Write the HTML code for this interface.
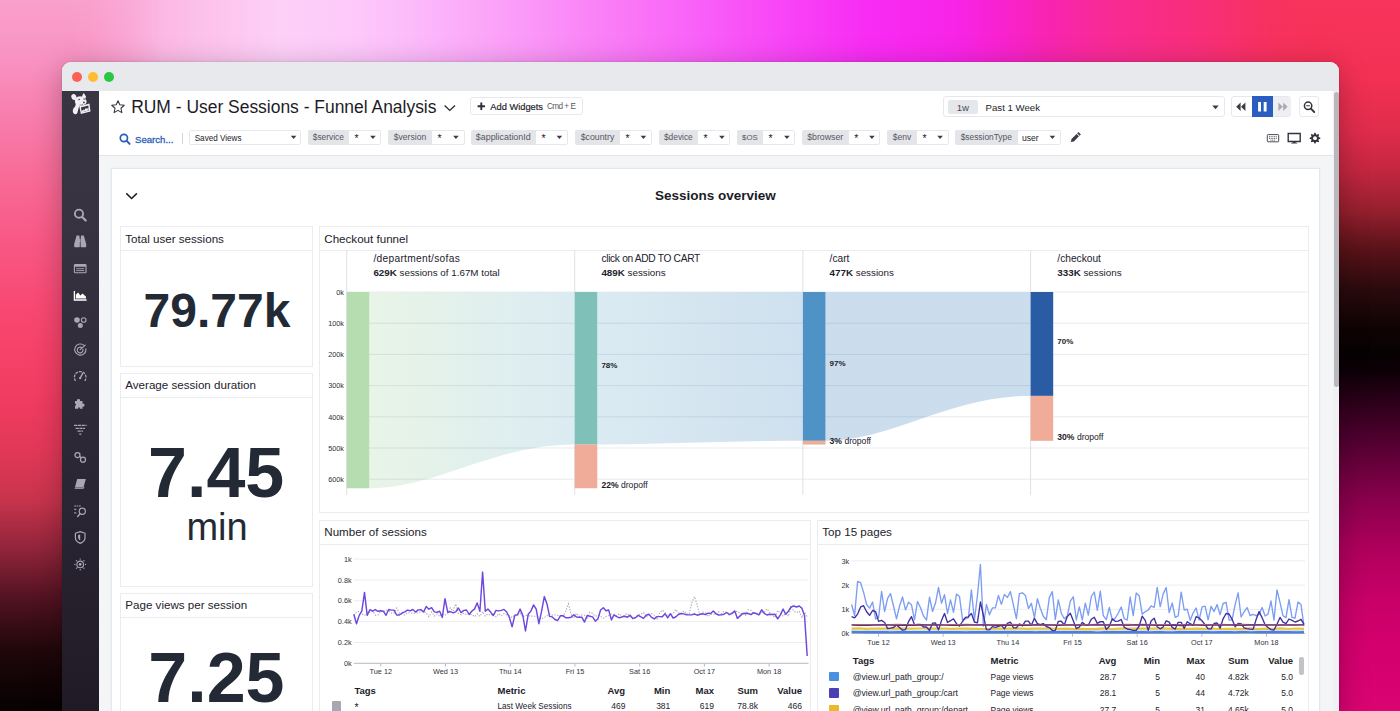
<!DOCTYPE html><html><head><meta charset="utf-8"><title>RUM - User Sessions - Funnel Analysis</title><style>
*{box-sizing:border-box;margin:0;padding:0}
html,body{width:1400px;height:711px;overflow:hidden}
body{position:relative;font-family:"Liberation Sans",sans-serif;color:#1c1c28;
 background:linear-gradient(90deg,#f9a0cc 0%,#fba9d7 7%,#fcc0ea 14%,#fdd0f8 20%,#fdcafa 25%,#fcb9fa 30%,#fba0f8 36%,#fa80f7 43%,#f960f8 50%,#f840f6 57%,#f82cf4 62%,#f824e8 68%,#f822d0 71.5%,#f824b0 75%,#f82a98 78.5%,#f82c88 82%,#f82e78 86%,#f83068 89%,#f8325c 93%,#f83458 100%)}
.abs{position:absolute}
#lstrip{left:0;top:0;width:160px;height:711px;background:linear-gradient(180deg,#f9a0cc 0,#f892c2 60px,#f87cab 120px,#f86a96 180px,#f85884 240px,#f84a74 300px,#f64268 350px,#f03c60 400px,#e23858 450px,#c8344c 500px,#90243a 550px,#501220 600px,#20070a 650px,#0a0203 700px,#080102 711px);-webkit-mask-image:linear-gradient(90deg,#000 70px,transparent 160px);mask-image:linear-gradient(90deg,#000 70px,transparent 160px)}
#rstrip{left:1240px;top:0;width:160px;height:711px;background:linear-gradient(180deg,#f8345c 0,#f23054 80px,#e02c4c 130px,#c42640 170px,#96202e 210px,#581218 250px,#2a0a0c 290px,#0e0304 330px,#070102 355px,#0c0006 370px,#2a0018 400px,#5a0035 450px,#8a004c 500px,#b0005c 550px,#c80068 600px,#d4006e 650px,#da0472 711px);-webkit-mask-image:linear-gradient(270deg,#000 70px,transparent 160px);mask-image:linear-gradient(270deg,#000 70px,transparent 160px)}
#win{left:62px;top:62px;width:1277px;height:700px;border-radius:9px 9px 0 0;background:#f4f5f7;overflow:hidden;box-shadow:0 6px 30px rgba(0,0,0,.27),0 0 2px rgba(0,0,0,.2)}
#tbar{left:0;top:0;width:1277px;height:29px;background:#e8e9ed}
.tl{position:absolute;top:9.5px;width:10px;height:10px;border-radius:50%}
#side{left:0;top:29px;width:37px;height:680px;background:linear-gradient(180deg,#3a3542 0,#37323f 150px,#2b2633 400px,#1f1a26 620px)}
#hdr{left:37px;top:29px;width:1234px;height:64.5px;background:#fff;border-bottom:1px solid #e3e4e8}
#scroll{left:1271px;top:29px;width:6px;height:680px;background:#f1f1f3}
#thumb{left:1271.5px;top:30px;width:5px;height:294.5px;background:#b9b9bd;border-radius:3px}
svg{position:absolute;overflow:visible}
.t{position:absolute;white-space:nowrap;line-height:1}
</style></head><body>
<div id="lstrip" class="abs"></div><div id="rstrip" class="abs"></div>
<div id="win" class="abs">
<div id="tbar" class="abs"><div class="tl" style="left:9.7px;background:#fe5f57"></div><div class="tl" style="left:25.8px;background:#febc2e"></div><div class="tl" style="left:42px;background:#28c840"></div></div>
<div id="side" class="abs"><!--SIDE--></div>
<div id="hdr" class="abs"></div>
<div id="scroll" class="abs"></div><div id="thumb" class="abs"></div>
<div class="abs" id="pg" style="left:-62px;top:-62px;width:1400px;height:773px"><div class="abs" style="left:470.30px;top:97.00px;width:112.30px;height:18.00px;border:1px solid #e7e8ed;border-radius:3px;background:#fff"></div><div class="abs" style="left:943.00px;top:96.40px;width:282.00px;height:20.60px;border:1px solid #e7e8ed;border-radius:3px;background:#fff"></div><div class="abs" style="left:947.50px;top:99.70px;width:30.20px;height:14.30px;background:#e6e7eb;border-radius:2px"></div><div class="abs" style="left:1231.40px;top:96.40px;width:60.00px;height:20.60px;border:1px solid #e7e8ed;border-radius:3px;background:#fff"></div><div class="abs" style="left:1272.90px;top:97.20px;width:17.90px;height:19.00px;background:#efeff3;border-radius:0 2px 2px 0"></div><div class="abs" style="left:1251.70px;top:96.40px;width:21.30px;height:20.60px;background:#2a5dbf"></div><div class="abs" style="left:1298.60px;top:96.40px;width:20.70px;height:20.60px;border:1px solid #e7e8ed;border-radius:3px;background:#fff"></div><div class="abs" style="left:181.60px;top:132.50px;width:1.00px;height:11.50px;background:#d3d4d9"></div><div class="abs" style="left:189.00px;top:130.00px;width:112.00px;height:14.50px;border:1px solid #e7e8ed;border-radius:2px;background:#fff"></div><div class="abs" style="left:307.70px;top:130.00px;width:73.80px;height:14.50px;border:1px solid #e7e8ed;border-radius:2px;background:#fff"></div><div class="abs" style="left:307.70px;top:130.00px;width:41.30px;height:14.50px;background:#e4e5e9;border-radius:2px 0 0 2px"></div><div class="abs" style="left:388.00px;top:130.00px;width:76.50px;height:14.50px;border:1px solid #e7e8ed;border-radius:2px;background:#fff"></div><div class="abs" style="left:388.00px;top:130.00px;width:44.00px;height:14.50px;background:#e4e5e9;border-radius:2px 0 0 2px"></div><div class="abs" style="left:470.50px;top:130.00px;width:97.50px;height:14.50px;border:1px solid #e7e8ed;border-radius:2px;background:#fff"></div><div class="abs" style="left:470.50px;top:130.00px;width:65.50px;height:14.50px;background:#e4e5e9;border-radius:2px 0 0 2px"></div><div class="abs" style="left:575.00px;top:130.00px;width:77.00px;height:14.50px;border:1px solid #e7e8ed;border-radius:2px;background:#fff"></div><div class="abs" style="left:575.00px;top:130.00px;width:45.00px;height:14.50px;background:#e4e5e9;border-radius:2px 0 0 2px"></div><div class="abs" style="left:658.70px;top:130.00px;width:71.80px;height:14.50px;border:1px solid #e7e8ed;border-radius:2px;background:#fff"></div><div class="abs" style="left:658.70px;top:130.00px;width:39.30px;height:14.50px;background:#e4e5e9;border-radius:2px 0 0 2px"></div><div class="abs" style="left:736.70px;top:130.00px;width:58.80px;height:14.50px;border:1px solid #e7e8ed;border-radius:2px;background:#fff"></div><div class="abs" style="left:736.70px;top:130.00px;width:26.30px;height:14.50px;background:#e4e5e9;border-radius:2px 0 0 2px"></div><div class="abs" style="left:801.70px;top:130.00px;width:78.80px;height:14.50px;border:1px solid #e7e8ed;border-radius:2px;background:#fff"></div><div class="abs" style="left:801.70px;top:130.00px;width:47.00px;height:14.50px;background:#e4e5e9;border-radius:2px 0 0 2px"></div><div class="abs" style="left:887.00px;top:130.00px;width:61.70px;height:14.50px;border:1px solid #e7e8ed;border-radius:2px;background:#fff"></div><div class="abs" style="left:887.00px;top:130.00px;width:30.00px;height:14.50px;background:#e4e5e9;border-radius:2px 0 0 2px"></div><div class="abs" style="left:955.00px;top:130.00px;width:106.00px;height:14.50px;border:1px solid #e7e8ed;border-radius:2px;background:#fff"></div><div class="abs" style="left:955.00px;top:130.00px;width:62.50px;height:14.50px;background:#e4e5e9;border-radius:2px 0 0 2px"></div><div class="abs" style="left:110.70px;top:167.50px;width:1209.80px;height:612.50px;background:#fff;border:1px solid #e6e7ec;box-shadow:0 0 2px rgba(40,40,60,.06)"></div><div class="abs" style="left:120.30px;top:226.30px;width:192.40px;height:140.60px;border:1px solid #ebecf0;background:#fff"></div><div class="abs" style="left:120.30px;top:250.10px;width:192.40px;height:1.00px;background:#ebecf0"></div><div class="abs" style="left:120.30px;top:372.90px;width:192.40px;height:214.40px;border:1px solid #ebecf0;background:#fff"></div><div class="abs" style="left:120.30px;top:396.70px;width:192.40px;height:1.00px;background:#ebecf0"></div><div class="abs" style="left:120.30px;top:593.00px;width:192.40px;height:187.00px;border:1px solid #ebecf0;background:#fff"></div><div class="abs" style="left:120.30px;top:616.80px;width:192.40px;height:1.00px;background:#ebecf0"></div><div class="abs" style="left:319.30px;top:226.30px;width:989.90px;height:287.10px;border:1px solid #ebecf0;background:#fff"></div><div class="abs" style="left:319.30px;top:250.10px;width:989.90px;height:1.00px;background:#ebecf0"></div><div class="abs" style="left:319.30px;top:520.00px;width:491.90px;height:260.00px;border:1px solid #ebecf0;background:#fff"></div><div class="abs" style="left:319.30px;top:543.80px;width:491.90px;height:1.00px;background:#ebecf0"></div><div class="abs" style="left:817.30px;top:520.00px;width:491.90px;height:260.00px;border:1px solid #ebecf0;background:#fff"></div><div class="abs" style="left:817.30px;top:543.80px;width:491.90px;height:1.00px;background:#ebecf0"></div><div class="abs" style="left:331.50px;top:701.00px;width:9.70px;height:11.00px;background:#a8a8b4;border-radius:1px"></div><div class="abs" style="left:829.00px;top:671.90px;width:10.00px;height:9.50px;background:#4a90e2;border-radius:1px"></div><div class="abs" style="left:829.00px;top:688.40px;width:10.00px;height:9.50px;background:#4a3fb5;border-radius:1px"></div><div class="abs" style="left:829.00px;top:704.90px;width:10.00px;height:9.50px;background:#e8bb2a;border-radius:1px"></div><div class="abs" style="left:1299.40px;top:657.00px;width:4.20px;height:18.00px;background:#c2c2c8;border-radius:2px"></div><svg width="1400" height="773" style="left:0;top:0"><polygon points="118.00,100.70 119.82,104.79 124.28,105.26 120.95,108.26 121.88,112.64 118.00,110.40 114.12,112.64 115.05,108.26 111.72,105.26 116.18,104.79" fill="none" stroke="#33333d" stroke-width="1.05" stroke-linejoin="round"/><polyline points="444.6,105.4 449.8,110.4 455,105.4" fill="none" stroke="#2a2a35" stroke-width="1.35"/><path d="M477.6 106.3h7.4M481.3 102.6v7.4" stroke="#2f2f3a" stroke-width="1.9" fill="none"/><path d="M1212.30 105.60h6.4l-3.2 3.6z" fill="#3b3b46"/><path d="M1240.6 102.6v8.4l-4.4-4.2zM1245.4 102.6v8.4l-4.4-4.2z" fill="#3b3b46"/><path d="M1258.1 102v9.4h2.9v-9.4zM1263.7 102v9.4h2.9v-9.4z" fill="#fff"/><path d="M1278.4 102.6v8.4l4.4-4.2zM1283.2 102.6v8.4l4.4-4.2z" fill="#a9a9b3"/><circle cx="1308.1" cy="105.8" r="3.7" fill="none" stroke="#33333d" stroke-width="1.5"/><path d="M1310.9 108.7l3.3 3.3" stroke="#33333d" stroke-width="1.8" stroke-linecap="round"/><path d="M1306.3 105.8h3.6" stroke="#33333d" stroke-width="1.1"/><circle cx="123.9" cy="138" r="3.6" fill="none" stroke="#2b5fb5" stroke-width="1.7"/><path d="M126.7 140.9l2.9 3" stroke="#2b5fb5" stroke-width="2" stroke-linecap="round"/><path d="M290.80 135.80h5.6l-2.8 3.2z" fill="#3b3b46"/><path d="M370.10 135.80h5.6l-2.8 3.2z" fill="#3b3b46"/><path d="M453.10 135.80h5.6l-2.8 3.2z" fill="#3b3b46"/><path d="M556.60 135.80h5.6l-2.8 3.2z" fill="#3b3b46"/><path d="M640.60 135.80h5.6l-2.8 3.2z" fill="#3b3b46"/><path d="M719.10 135.80h5.6l-2.8 3.2z" fill="#3b3b46"/><path d="M784.10 135.80h5.6l-2.8 3.2z" fill="#3b3b46"/><path d="M869.10 135.80h5.6l-2.8 3.2z" fill="#3b3b46"/><path d="M937.30 135.80h5.6l-2.8 3.2z" fill="#3b3b46"/><path d="M1049.60 135.80h5.6l-2.8 3.2z" fill="#3b3b46"/><g transform="translate(1075.3 137.6) rotate(45)"><path d="M-1.7 -6.2h3.4v1.9h-3.4zM-1.7 -3.5h3.4v7.2l-1.7 2.6l-1.7-2.6z" fill="#3d3d48"/></g><rect x="1267.3" y="134.6" width="11.4" height="7.2" rx="0.8" fill="none" stroke="#4a4a55" stroke-width="1"/><path d="M1269 136.7h8M1269 138.4h8M1270.4 140.1h5.2" stroke="#4a4a55" stroke-width=".9" stroke-dasharray="1 .7"/><path d="M1288.2 133.5h12v8h-12z" fill="none" stroke="#33333d" stroke-width="1.4"/><path d="M1292.8 141.5h2.8v1.3h1.6v.8h-6v-.8h1.6z" fill="#33333d"/><polygon points="1320.37,137.67 1320.37,138.73 1318.73,139.33 1318.44,140.04 1319.17,141.63 1318.43,142.37 1316.84,141.64 1316.13,141.93 1315.53,143.57 1314.47,143.57 1313.87,141.93 1313.16,141.64 1311.57,142.37 1310.83,141.63 1311.56,140.04 1311.27,139.33 1309.63,138.73 1309.63,137.67 1311.27,137.07 1311.56,136.36 1310.83,134.77 1311.57,134.03 1313.16,134.76 1313.87,134.47 1314.47,132.83 1315.53,132.83 1316.13,134.47 1316.84,134.76 1318.43,134.03 1319.17,134.77 1318.44,136.36 1318.73,137.07" fill="#33333d"/><circle cx="1315" cy="138.2" r="1.9" fill="#fff"/><g fill="#f1eff4"><ellipse cx="73.900" cy="97" rx="2.500" ry="2.900" transform="rotate(-25 73.900 97)"/><path d="M81.800 97.300l1.300-3.700q.4-.8 1 -.1l2 3.300-.9 1.900-1.700-.6z"/><path d="M75.300 98.400q3.200-3.300 7.400-1.700 3.600 1.700 3.900 5.100.1 1.500-1.300 2.400l-4.100 1.700q-2.300.8-4.300-.5-2.900-2.300-1.600-7z"/><path d="M76.300 103.300q-.9 1.700-1.200 3.200-2.300 1.700-2.400 4.400.1 2.600 2 3.300 2 .4 2.700-1.500l1.100-4.300 1.200-3.700z"/><path d="M79.300 106.200l10.200-2.600 1 7.800-9.700 2.500z"/></g><path d="M80.900 107.500l7.400-1.900.7 4.800-7.100 1.900z" fill="#38333f"/><path d="M81.500 111.500l1.700-2 1.200.8 1.500-2.500 1.100 1.400 1.300-2.100.5 3.200-6.800 1.900z" fill="#f1eff4"/><circle cx="79.100" cy="99.400" r=".75" fill="#38333f"/><circle cx="83.900" cy="102.400" r=".85" fill="#38333f"/><path d="M83.400 98.200q1.700-.6 2.300 1.600-1.300.7-2.400-.3z" fill="#38333f" opacity=".55"/><path d="M79.600 104.900q1.700.6 3.500-.5" stroke="#38333f" stroke-width=".5" fill="none"/><circle cx="79" cy="213.700" r="4.100" fill="none" stroke="#aaa6b4" stroke-width="1.900"/><path d="M82.200 217l3.500 3.500" stroke="#aaa6b4" stroke-width="2.300" stroke-linecap="round"/><path d="M76.600 235.600h2.700l.5 3.400v7.600q0 .6-.6.6h-4.400q-.6 0-.6-.6v-2.600zM83.800 235.600h-2.700l-.5 3.400v7.600q0 .6.600.6h4.400q.6 0 .6-.6v-2.600zM79.400 239.300h1.600v3h-1.600z" fill="#aaa6b4"/><rect x="74.400" y="264.500" width="11.600" height="8.300" rx=".8" fill="none" stroke="#aaa6b4" stroke-width="1.100"/><path d="M74.400 265h11.600v1.800h-11.600z" fill="#aaa6b4"/><path d="M76.200 268.700h8M76.200 270.600h8" stroke="#aaa6b4" stroke-width=".9"/><path d="M74.400 291v9h12.200" fill="none" stroke="#fff" stroke-width="1.300"/><path d="M75.800 298.600v-3.800l2.300-2.300 2.300 2.900 2.200-2 3.400 3.300v1.900z" fill="#fff"/><circle cx="77" cy="320" r="2.800" fill="#aaa6b4"/><circle cx="83.700" cy="320" r="2.300" fill="none" stroke="#aaa6b4" stroke-width="1.100"/><circle cx="80.300" cy="325.400" r="2.500" fill="#aaa6b4"/><g fill="none" stroke="#aaa6b4" stroke-width="1.150" stroke-linecap="round"><path d="M84.300 345.600a5.600 5.600 0 1 0 1.600 3.200"/><path d="M81.900 347.700a2.900 2.900 0 1 0 1.100 1.700"/><path d="M80.200 349.700l5-4.600"/></g><g fill="none" stroke="#aaa6b4" stroke-linecap="butt"><path d="M75.600 380.900A5.800 5.800 0 1 1 84.800 380.900" stroke-width="1.300" stroke-dasharray="2.700 1.100"/><path d="M80.200 378l2.500-4.600" stroke-width="1.500" stroke-linecap="round"/></g><circle cx="80.200" cy="378.100" r="1.200" fill="#aaa6b4"/><path d="M75 401h2.100a1.500 1.500 0 1 1 2.800 0h2.600v2.700a1.500 1.500 0 1 1 0 2.800v2.200h-2.600v-1.200h-1.700v1.200h-3.200v-3.200h1v-1.700h-1z" fill="#aaa6b4"/><path d="M74 425.400h12.600M75.600 428.300h9.400M77.600 431.200h5.400M79.300 434.100h2" stroke="#aaa6b4" stroke-width="1.250" stroke-dasharray="3.200 .6" fill="none"/><g fill="none" stroke="#aaa6b4" stroke-width="1.250"><circle cx="77.500" cy="455" r="2.500"/><circle cx="83" cy="459.700" r="2.500"/><path d="M79.600 456.600q1.200-.2 1.300 1.500"/></g><path d="M77.200 479h8.600l-2.300 8.600h-8.600z" fill="#aaa6b4"/><path d="M74.700 488.300h8.800l.5-1.300" fill="none" stroke="#aaa6b4" stroke-width="1"/><path d="M74.200 506h7M74.200 509.400h2.700M74.200 512.800h2.700" stroke="#aaa6b4" stroke-width="1.200" stroke-dasharray="1.700 .700"/><circle cx="82.300" cy="511.300" r="3.100" fill="none" stroke="#aaa6b4" stroke-width="1.200"/><path d="M80 513.800l-2.300 2.700" stroke="#aaa6b4" stroke-width="1.400" stroke-linecap="round"/><path d="M80.200 531.600l4.800 1.600v4.600q0 3.700-4.800 5.600-4.800-1.900-4.800-5.600v-4.600z" fill="none" stroke="#aaa6b4" stroke-width="1.200" stroke-linejoin="round"/><path d="M80.200 534.400v6.200q-2.100-1.100-2.100-3v-2.500z" fill="#aaa6b4"/><circle cx="80.200" cy="564.400" r="3.300" fill="none" stroke="#aaa6b4" stroke-width="1.100"/><circle cx="80.200" cy="564.400" r="1.400" fill="#aaa6b4"/><circle cx="85.50" cy="564.40" r=".7" fill="#aaa6b4"/><circle cx="83.95" cy="568.15" r=".7" fill="#aaa6b4"/><circle cx="80.20" cy="569.70" r=".7" fill="#aaa6b4"/><circle cx="76.45" cy="568.15" r=".7" fill="#aaa6b4"/><circle cx="74.90" cy="564.40" r=".7" fill="#aaa6b4"/><circle cx="76.45" cy="560.65" r=".7" fill="#aaa6b4"/><circle cx="80.20" cy="559.10" r=".7" fill="#aaa6b4"/><circle cx="83.95" cy="560.65" r=".7" fill="#aaa6b4"/><polyline points="126.3,193.4 131.6,198.5 136.900,193.4" fill="none" stroke="#1c1c28" stroke-width="1.5"/><path d="M346.7 292.00H1309" stroke="#e9eaee" stroke-width="1"/><path d="M346.7 323.20H1309" stroke="#e9eaee" stroke-width="1"/><path d="M346.7 354.40H1309" stroke="#e9eaee" stroke-width="1"/><path d="M346.7 385.60H1309" stroke="#e9eaee" stroke-width="1"/><path d="M346.7 416.80H1309" stroke="#e9eaee" stroke-width="1"/><path d="M346.7 448.00H1309" stroke="#e9eaee" stroke-width="1"/><path d="M346.7 479.20H1309" stroke="#e9eaee" stroke-width="1"/><path d="M346.7 250.5V495" stroke="#dfe0e5" stroke-width="1"/><path d="M574.7 250.5V495" stroke="#dfe0e5" stroke-width="1"/><path d="M802.9 250.5V495" stroke="#dfe0e5" stroke-width="1"/><path d="M1030.6 250.5V495" stroke="#dfe0e5" stroke-width="1"/><defs><linearGradient id="f1" x1="0" x2="1"><stop offset="0" stop-color="#e6f3e4"/><stop offset="1" stop-color="#d6e9f0"/></linearGradient><linearGradient id="f2" x1="0" x2="1"><stop offset="0" stop-color="#d6e8f1"/><stop offset="1" stop-color="#c8dcec"/></linearGradient><linearGradient id="f3" x1="0" x2="1"><stop offset="0" stop-color="#c4d9eb"/><stop offset="1" stop-color="#c4d9eb"/></linearGradient></defs><path d="M369.30 292H574.70V444.57C492.54 444.57 437.08 488.25 369.30 488.25z" fill="url(#f1)" opacity=".88"/><path d="M597.30 292H802.90V440.82C720.66 440.82 665.15 444.57 597.30 444.57z" fill="url(#f2)" opacity=".88"/><path d="M825.50 292H1030.60V395.90C948.56 395.90 893.18 440.82 825.50 440.82z" fill="url(#f3)" opacity=".88"/><clipPath id="fc"><path d="M369.30 292H574.70V444.57C492.54 444.57 437.08 488.25 369.30 488.25z M597.30 292H802.90V440.82C720.66 440.82 665.15 444.57 597.30 444.57z M825.50 292H1030.60V395.90C948.56 395.90 893.18 440.82 825.50 440.82z"/></clipPath><g clip-path="url(#fc)"><path d="M369 323.20H1030.6" stroke="rgba(60,95,130,.11)" stroke-width="1"/><path d="M369 354.40H1030.6" stroke="rgba(60,95,130,.11)" stroke-width="1"/><path d="M369 385.60H1030.6" stroke="rgba(60,95,130,.11)" stroke-width="1"/><path d="M369 416.80H1030.6" stroke="rgba(60,95,130,.11)" stroke-width="1"/><path d="M369 448.00H1030.6" stroke="rgba(60,95,130,.11)" stroke-width="1"/><path d="M369 479.20H1030.6" stroke="rgba(60,95,130,.11)" stroke-width="1"/></g><rect x="346.7" y="292" width="22.6" height="196.25" fill="#b5ddb0"/><rect x="574.7" y="292" width="22.6" height="152.57" fill="#7fc1b8"/><rect x="574.7" y="444.57" width="22.6" height="43.68" fill="#f0ac98"/><rect x="802.9" y="292" width="22.6" height="148.82" fill="#4e92c6"/><rect x="802.9" y="440.82" width="22.6" height="3.74" fill="#f0ac98"/><rect x="1030.6" y="292" width="22.6" height="103.90" fill="#2a5ca6"/><rect x="1030.6" y="395.90" width="22.6" height="44.93" fill="#f0ac98"/><path d="M353.8 642.46H808.5" stroke="#ecedf1" stroke-width="1"/><path d="M353.8 621.62H808.5" stroke="#ecedf1" stroke-width="1"/><path d="M353.8 600.78H808.5" stroke="#ecedf1" stroke-width="1"/><path d="M353.8 579.94H808.5" stroke="#ecedf1" stroke-width="1"/><path d="M353.8 559.10H808.5" stroke="#ecedf1" stroke-width="1"/><path d="M353.8 663.3H808.5" stroke="#b9bac2" stroke-width="1"/><path d="M380.80 663.3v3.2" stroke="#b9bac2" stroke-width="1"/><path d="M445.52 663.3v3.2" stroke="#b9bac2" stroke-width="1"/><path d="M510.24 663.3v3.2" stroke="#b9bac2" stroke-width="1"/><path d="M574.96 663.3v3.2" stroke="#b9bac2" stroke-width="1"/><path d="M639.68 663.3v3.2" stroke="#b9bac2" stroke-width="1"/><path d="M704.40 663.3v3.2" stroke="#b9bac2" stroke-width="1"/><path d="M769.12 663.3v3.2" stroke="#b9bac2" stroke-width="1"/><path d="M353.8 615.4 L356.5 612.3 L359.2 611.1 L361.8 613.9 L364.5 615.4 L367.2 613.0 L369.9 612.0 L372.6 610.8 L375.3 615.1 L377.9 615.2 L380.6 611.4 L383.3 611.9 L386.0 609.9 L388.7 610.9 L391.4 613.0 L394.0 613.3 L396.7 608.0 L399.4 613.4 L402.1 614.3 L404.8 615.0 L407.5 612.7 L410.1 612.7 L412.8 613.6 L415.5 613.2 L418.2 612.6 L420.9 611.8 L423.6 611.1 L426.2 612.9 L428.9 616.7 L431.6 612.1 L434.3 616.1 L437.0 613.9 L439.7 616.4 L442.3 613.7 L445.0 615.2 L447.7 613.5 L450.4 607.8 L453.1 611.2 L455.7 603.9 L458.4 613.3 L461.1 614.9 L463.8 613.2 L466.5 614.7 L469.2 613.9 L471.8 614.5 L474.5 616.7 L477.2 613.9 L479.9 616.5 L482.6 611.6 L485.3 616.2 L487.9 614.0 L490.6 615.4 L493.3 613.7 L496.0 616.7 L498.7 613.8 L501.4 616.0 L504.0 613.5 L506.7 614.8 L509.4 615.8 L512.1 617.6 L514.8 614.7 L517.5 615.4 L520.1 613.3 L522.8 617.1 L525.5 615.4 L528.2 615.6 L530.9 616.1 L533.6 616.2 L536.2 616.3 L538.9 617.8 L541.6 618.7 L544.3 617.5 L547.0 615.7 L549.6 614.0 L552.3 615.1 L555.0 614.9 L557.7 615.5 L560.4 615.6 L563.1 616.6 L565.7 611.2 L568.4 603.9 L571.1 614.3 L573.8 618.2 L576.5 613.2 L579.2 616.4 L581.8 615.0 L584.5 615.2 L587.2 618.9 L589.9 612.2 L592.6 613.3 L595.3 616.3 L597.9 615.2 L600.6 616.3 L603.3 618.1 L606.0 616.6 L608.7 615.6 L611.4 614.2 L614.0 614.8 L616.7 616.0 L619.4 613.5 L622.1 617.4 L624.8 614.4 L627.4 613.7 L630.1 616.2 L632.8 618.9 L635.5 617.2 L638.2 614.9 L640.9 614.3 L643.5 612.3 L646.2 617.0 L648.9 615.0 L651.6 613.7 L654.3 615.1 L657.0 619.2 L659.6 613.1 L662.3 610.2 L665.0 612.5 L667.7 616.0 L670.4 615.0 L673.1 613.7 L675.7 609.4 L678.4 612.8 L681.1 613.6 L683.8 610.9 L686.5 613.8 L689.2 614.3 L691.8 602.9 L694.5 596.6 L697.2 604.9 L699.9 615.4 L702.6 612.0 L705.3 612.6 L707.9 616.6 L710.6 614.4 L713.3 614.2 L716.0 614.0 L718.7 611.8 L721.3 613.5 L724.0 611.4 L726.7 612.7 L729.4 613.4 L732.1 612.6 L734.8 612.0 L737.4 611.2 L740.1 613.7 L742.8 613.2 L745.5 615.3 L748.2 609.8 L750.9 610.1 L753.5 613.1 L756.2 613.7 L758.9 615.2 L761.6 612.6 L764.3 612.5 L767.0 608.9 L769.6 612.5 L772.3 614.5 L775.0 617.7 L777.7 610.5 L780.4 612.9 L783.1 616.3 L785.7 613.0 L788.4 616.4 L791.1 607.0 L793.8 611.2 L796.5 612.6 L799.2 611.2 L801.8 617.8 L804.5 612.2 L807.2 616.9" fill="none" stroke="#a9a9b3" stroke-width="1.1" stroke-dasharray="1.3 1.5"/><path d="M353.8 614.3 L356.5 623.7 L359.2 615.4 L361.8 611.2 L364.5 592.4 L367.2 615.4 L369.9 609.7 L372.6 611.2 L375.3 609.6 L377.9 611.3 L380.6 610.8 L383.3 611.2 L386.0 615.3 L388.7 609.5 L391.4 610.1 L394.0 610.1 L396.7 615.0 L399.4 615.0 L402.1 613.0 L404.8 611.9 L407.5 610.1 L410.1 610.8 L412.8 609.5 L415.5 612.1 L418.2 609.9 L420.9 609.6 L423.6 612.0 L426.2 606.6 L428.9 609.2 L431.6 607.7 L434.3 611.9 L437.0 612.2 L439.7 611.3 L442.3 617.5 L445.0 598.7 L447.7 612.2 L450.4 611.7 L453.1 612.9 L455.7 611.9 L458.4 608.0 L461.1 612.7 L463.8 610.4 L466.5 610.0 L469.2 614.5 L471.8 611.1 L474.5 609.1 L477.2 602.9 L479.9 611.2 L482.6 572.1 L485.3 611.2 L487.9 609.1 L490.6 612.1 L493.3 615.5 L496.0 610.4 L498.7 610.9 L501.4 610.4 L504.0 609.4 L506.7 612.0 L509.4 617.5 L512.1 626.8 L514.8 615.4 L517.5 614.8 L520.1 609.1 L522.8 615.4 L525.5 631.0 L528.2 614.3 L530.9 611.1 L533.6 604.9 L536.2 609.1 L538.9 623.7 L541.6 611.2 L544.3 596.6 L547.0 603.9 L549.6 616.4 L552.3 616.9 L555.0 619.5 L557.7 620.5 L560.4 615.8 L563.1 615.6 L565.7 617.8 L568.4 617.7 L571.1 617.3 L573.8 614.7 L576.5 617.0 L579.2 617.2 L581.8 617.2 L584.5 622.1 L587.2 615.5 L589.9 616.2 L592.6 616.9 L595.3 621.2 L597.9 618.9 L600.6 610.0 L603.3 607.7 L606.0 610.8 L608.7 610.0 L611.4 619.9 L614.0 614.9 L616.7 616.6 L619.4 617.8 L622.1 616.9 L624.8 616.3 L627.4 617.2 L630.1 615.3 L632.8 618.4 L635.5 617.8 L638.2 615.3 L640.9 616.9 L643.5 618.4 L646.2 615.2 L648.9 614.2 L651.6 617.4 L654.3 618.9 L657.0 616.6 L659.6 616.6 L662.3 616.7 L665.0 613.7 L667.7 617.8 L670.4 613.7 L673.1 618.0 L675.7 617.0 L678.4 614.5 L681.1 613.5 L683.8 613.9 L686.5 614.7 L689.2 614.9 L691.8 614.8 L694.5 614.0 L697.2 615.2 L699.9 614.3 L702.6 613.7 L705.3 614.6 L707.9 613.2 L710.6 613.5 L713.3 611.0 L716.0 613.8 L718.7 615.0 L721.3 614.9 L724.0 614.2 L726.7 612.5 L729.4 614.7 L732.1 613.4 L734.8 610.9 L737.4 618.4 L740.1 615.9 L742.8 613.5 L745.5 613.3 L748.2 613.5 L750.9 614.7 L753.5 612.8 L756.2 613.5 L758.9 614.9 L761.6 609.8 L764.3 613.4 L767.0 615.0 L769.6 614.3 L772.3 614.5 L775.0 614.3 L777.7 618.9 L780.4 614.9 L783.1 609.1 L785.7 614.3 L788.4 611.2 L791.1 607.0 L793.8 606.0 L796.5 607.0 L799.2 606.0 L801.8 608.1 L804.5 615.4 L807.2 656.0" fill="none" stroke="#6e48de" stroke-width="1.45" stroke-linejoin="round"/><path d="M851.6 609.30H1305" stroke="#ecedf1" stroke-width="1"/><path d="M851.6 585.10H1305" stroke="#ecedf1" stroke-width="1"/><path d="M851.6 560.90H1305" stroke="#ecedf1" stroke-width="1"/><path d="M851.6 633.5H1305" stroke="#b9bac2" stroke-width="1"/><path d="M878.50 633.5v3.2" stroke="#b9bac2" stroke-width="1"/><path d="M943.17 633.5v3.2" stroke="#b9bac2" stroke-width="1"/><path d="M1007.84 633.5v3.2" stroke="#b9bac2" stroke-width="1"/><path d="M1072.51 633.5v3.2" stroke="#b9bac2" stroke-width="1"/><path d="M1137.18 633.5v3.2" stroke="#b9bac2" stroke-width="1"/><path d="M1201.85 633.5v3.2" stroke="#b9bac2" stroke-width="1"/><path d="M1266.52 633.5v3.2" stroke="#b9bac2" stroke-width="1"/><path d="M851.6 604.5 L854.6 615.4 L857.6 581.5 L860.6 582.7 L863.6 592.4 L866.6 604.5 L869.6 608.1 L872.6 602.0 L875.6 619.0 L878.6 617.3 L881.6 591.4 L884.6 611.5 L887.6 598.4 L890.5 593.6 L893.5 606.0 L896.5 618.8 L899.5 606.2 L902.5 597.0 L905.5 609.9 L908.5 602.2 L911.5 604.8 L914.5 619.8 L917.5 601.5 L920.5 607.7 L923.5 615.9 L926.5 620.1 L929.5 597.1 L932.5 611.4 L935.5 603.1 L938.5 587.5 L941.5 603.2 L944.5 594.7 L947.5 613.6 L950.5 599.8 L953.5 612.3 L956.5 594.1 L959.5 596.6 L962.5 619.5 L965.4 619.0 L968.4 617.7 L971.4 589.9 L974.4 620.2 L977.4 596.0 L980.4 564.5 L983.4 626.2 L986.4 604.5 L989.4 614.8 L992.4 607.9 L995.4 607.9 L998.4 595.5 L1001.4 604.4 L1004.4 594.4 L1007.4 597.5 L1010.4 591.6 L1013.4 604.8 L1016.4 618.6 L1019.4 593.6 L1022.4 592.8 L1025.4 595.4 L1028.4 608.4 L1031.4 603.3 L1034.4 617.8 L1037.4 598.6 L1040.3 608.3 L1043.3 616.3 L1046.3 619.8 L1049.3 597.6 L1052.3 591.6 L1055.3 619.6 L1058.3 599.8 L1061.3 613.2 L1064.3 618.8 L1067.3 616.1 L1070.3 601.1 L1073.3 596.8 L1076.3 620.0 L1079.3 606.9 L1082.3 620.0 L1085.3 603.1 L1088.3 615.2 L1091.3 596.5 L1094.3 592.0 L1097.3 610.4 L1100.3 591.2 L1103.3 615.7 L1106.3 619.7 L1109.3 607.4 L1112.3 620.1 L1115.3 618.0 L1118.2 613.3 L1121.2 607.0 L1124.2 618.7 L1127.2 620.0 L1130.2 597.0 L1133.2 615.6 L1136.2 593.0 L1139.2 595.8 L1142.2 614.1 L1145.2 611.8 L1148.2 610.0 L1151.2 605.8 L1154.2 607.5 L1157.2 587.5 L1160.2 606.7 L1163.2 593.9 L1166.2 587.5 L1169.2 612.6 L1172.2 603.0 L1175.2 617.3 L1178.2 615.9 L1181.2 592.2 L1184.2 610.0 L1187.2 609.1 L1190.2 620.2 L1193.1 613.1 L1196.1 608.0 L1199.1 620.1 L1202.1 606.8 L1205.1 606.2 L1208.1 619.9 L1211.1 606.4 L1214.1 611.6 L1217.1 604.5 L1220.1 614.7 L1223.1 603.5 L1226.1 602.3 L1229.1 620.1 L1232.1 619.9 L1235.1 604.7 L1238.1 592.8 L1241.1 617.0 L1244.1 611.9 L1247.1 607.6 L1250.1 615.5 L1253.1 614.4 L1256.1 615.7 L1259.1 614.3 L1262.1 607.5 L1265.1 616.0 L1268.0 614.1 L1271.0 601.0 L1274.0 620.1 L1277.0 589.9 L1280.0 602.4 L1283.0 615.7 L1286.0 617.6 L1289.0 599.7 L1292.0 617.3 L1295.0 618.2 L1298.0 602.0 L1301.0 604.5 L1304.0 626.2" fill="none" stroke="#7b9ef2" stroke-width="1.35" stroke-linejoin="round"/><path d="M851.6 631.9 L859.3 631.9 L866.9 632.0 L874.6 632.1 L882.3 632.2 L889.9 632.0 L897.6 632.1 L905.3 632.2 L912.9 632.0 L920.6 632.0 L928.3 632.0 L935.9 632.1 L943.6 632.0 L951.3 632.1 L958.9 632.2 L966.6 632.0 L974.3 632.0 L982.0 631.8 L989.6 632.0 L997.3 632.1 L1005.0 631.9 L1012.6 632.0 L1020.3 632.0 L1028.0 632.1 L1035.6 632.0 L1043.3 631.9 L1051.0 632.0 L1058.6 632.0 L1066.3 632.2 L1074.0 632.0 L1081.6 632.0 L1089.3 632.0 L1097.0 632.0 L1104.6 631.9 L1112.3 632.1 L1120.0 632.0 L1127.6 632.0 L1135.3 632.2 L1143.0 632.1 L1150.6 632.1 L1158.3 631.9 L1166.0 632.1 L1173.6 632.0 L1181.3 632.0 L1189.0 632.1 L1196.7 632.2 L1204.3 632.0 L1212.0 632.1 L1219.7 632.0 L1227.3 632.2 L1235.0 632.1 L1242.7 631.9 L1250.3 631.9 L1258.0 632.2 L1265.7 632.2 L1273.3 632.1 L1281.0 632.0 L1288.7 632.0 L1296.3 632.0 L1304.0 632.1" fill="none" stroke="#4a80db" stroke-width="2.8"/><path d="M851.6 630.0 L859.3 630.5 L866.9 630.3 L874.6 630.3 L882.3 630.2 L889.9 630.6 L897.6 630.4 L905.3 630.5 L912.9 630.5 L920.6 630.5 L928.3 630.4 L935.9 630.4 L943.6 630.5 L951.3 630.3 L958.9 630.4 L966.6 630.8 L974.3 630.2 L982.0 630.4 L989.6 630.5 L997.3 630.3 L1005.0 630.3 L1012.6 630.3 L1020.3 630.5 L1028.0 630.3 L1035.6 630.6 L1043.3 630.1 L1051.0 630.5 L1058.6 630.4 L1066.3 630.4 L1074.0 630.3 L1081.6 630.4 L1089.3 630.3 L1097.0 630.9 L1104.6 630.4 L1112.3 630.4 L1120.0 630.4 L1127.6 630.2 L1135.3 630.5 L1143.0 630.4 L1150.6 630.7 L1158.3 630.3 L1166.0 630.6 L1173.6 630.6 L1181.3 630.0 L1189.0 630.3 L1196.7 630.4 L1204.3 630.3 L1212.0 630.6 L1219.7 630.5 L1227.3 630.3 L1235.0 630.7 L1242.7 630.3 L1250.3 630.6 L1258.0 630.4 L1265.7 630.5 L1273.3 630.1 L1281.0 630.2 L1288.7 630.4 L1296.3 630.7 L1304.0 630.5" fill="none" stroke="#cfe0fa" stroke-width="1.1"/><path d="M851.6 628.6 L859.3 628.4 L866.9 628.8 L874.6 628.5 L882.3 628.7 L889.9 628.7 L897.6 628.3 L905.3 628.6 L912.9 628.7 L920.6 628.5 L928.3 628.4 L935.9 628.7 L943.6 628.5 L951.3 628.8 L958.9 628.7 L966.6 628.7 L974.3 628.9 L982.0 629.0 L989.6 629.0 L997.3 628.7 L1005.0 628.7 L1012.6 628.7 L1020.3 628.6 L1028.0 628.9 L1035.6 628.7 L1043.3 628.6 L1051.0 628.5 L1058.6 628.8 L1066.3 628.7 L1074.0 629.1 L1081.6 628.8 L1089.3 629.1 L1097.0 628.9 L1104.6 628.4 L1112.3 629.1 L1120.0 628.5 L1127.6 628.6 L1135.3 628.7 L1143.0 628.6 L1150.6 628.6 L1158.3 628.5 L1166.0 628.7 L1173.6 628.8 L1181.3 628.8 L1189.0 628.9 L1196.7 628.7 L1204.3 628.8 L1212.0 628.5 L1219.7 629.0 L1227.3 628.9 L1235.0 628.8 L1242.7 629.1 L1250.3 628.3 L1258.0 629.1 L1265.7 628.7 L1273.3 628.8 L1281.0 628.3 L1288.7 629.0 L1296.3 628.5 L1304.0 628.8" fill="none" stroke="#e9c43f" stroke-width="2.2"/><path d="M851.6 616.6 L854.6 617.8 L857.6 614.1 L860.6 606.9 L863.6 605.7 L866.6 611.7 L869.6 615.4 L872.6 610.5 L875.6 611.7 L878.6 621.4 L881.6 620.4 L884.6 622.5 L887.6 628.6 L890.5 628.2 L893.5 627.5 L896.5 625.0 L899.5 627.6 L902.5 630.2 L905.5 629.6 L908.5 621.7 L911.5 616.7 L914.5 624.8 L917.5 624.3 L920.5 624.4 L923.5 627.0 L926.5 627.0 L929.5 630.5 L932.5 623.2 L935.5 622.9 L938.5 629.9 L941.5 620.6 L944.5 613.5 L947.5 622.5 L950.5 620.7 L953.5 618.8 L956.5 623.7 L959.5 626.0 L962.5 621.5 L965.4 617.4 L968.4 616.8 L971.4 613.4 L974.4 622.0 L977.4 622.9 L980.4 602.0 L983.4 615.4 L986.4 629.6 L989.4 629.9 L992.4 626.6 L995.4 627.3 L998.4 626.3 L1001.4 625.4 L1004.4 628.9 L1007.4 623.4 L1010.4 622.1 L1013.4 627.8 L1016.4 627.8 L1019.4 623.9 L1022.4 625.9 L1025.4 621.1 L1028.4 621.1 L1031.4 625.3 L1034.4 618.3 L1037.4 623.7 L1040.3 624.7 L1043.3 623.6 L1046.3 626.5 L1049.3 627.6 L1052.3 630.6 L1055.3 630.4 L1058.3 621.3 L1061.3 621.2 L1064.3 624.9 L1067.3 616.6 L1070.3 613.2 L1073.3 620.8 L1076.3 628.6 L1079.3 627.1 L1082.3 622.4 L1085.3 624.8 L1088.3 625.2 L1091.3 619.2 L1094.3 617.3 L1097.3 623.4 L1100.3 621.7 L1103.3 621.7 L1106.3 629.6 L1109.3 626.3 L1112.3 618.9 L1115.3 621.3 L1118.2 621.2 L1121.2 619.5 L1124.2 627.2 L1127.2 629.0 L1130.2 629.6 L1133.2 630.3 L1136.2 630.4 L1139.2 626.0 L1142.2 616.2 L1145.2 620.4 L1148.2 630.4 L1151.2 620.8 L1154.2 618.3 L1157.2 626.7 L1160.2 628.8 L1163.2 627.0 L1166.2 620.8 L1169.2 622.2 L1172.2 627.3 L1175.2 629.1 L1178.2 622.3 L1181.2 622.3 L1184.2 628.5 L1187.2 621.7 L1190.2 623.7 L1193.1 625.4 L1196.1 616.6 L1199.1 618.0 L1202.1 621.0 L1205.1 624.6 L1208.1 628.9 L1211.1 628.8 L1214.1 623.5 L1217.1 623.0 L1220.1 628.2 L1223.1 618.8 L1226.1 613.5 L1229.1 614.0 L1232.1 619.3 L1235.1 626.8 L1238.1 623.5 L1241.1 623.6 L1244.1 627.9 L1247.1 628.6 L1250.1 629.1 L1253.1 629.3 L1256.1 619.6 L1259.1 611.6 L1262.1 617.8 L1265.1 624.8 L1268.0 627.5 L1271.0 629.6 L1274.0 630.0 L1277.0 624.2 L1280.0 617.4 L1283.0 622.2 L1286.0 623.6 L1289.0 619.0 L1292.0 620.4 L1295.0 622.0 L1298.0 621.0 L1301.0 619.3 L1304.0 624.4" fill="none" stroke="#3f2fa0" stroke-width="1.35" stroke-linejoin="round"/><path d="M851.6 624.5 L859.3 624.5 L866.9 624.6 L874.6 624.5 L882.3 624.5 L889.9 624.5 L897.6 624.4 L905.3 624.6 L912.9 624.5 L920.6 624.6 L928.3 624.6 L935.9 624.6 L943.6 624.5 L951.3 624.5 L958.9 624.5 L966.6 624.3 L974.3 624.5 L982.0 624.7 L989.6 624.5 L997.3 624.6 L1005.0 624.6 L1012.6 624.4 L1020.3 624.6 L1028.0 624.7 L1035.6 624.5 L1043.3 624.6 L1051.0 624.7 L1058.6 624.6 L1066.3 624.6 L1074.0 624.5 L1081.6 624.6 L1089.3 624.5 L1097.0 624.4 L1104.6 624.6 L1112.3 624.6 L1120.0 624.6 L1127.6 624.4 L1135.3 624.6 L1143.0 624.4 L1150.6 624.7 L1158.3 624.6 L1166.0 624.6 L1173.6 624.6 L1181.3 624.6 L1189.0 624.5 L1196.7 624.5 L1204.3 624.5 L1212.0 624.6 L1219.7 624.4 L1227.3 624.5 L1235.0 624.6 L1242.7 624.4 L1250.3 624.6 L1258.0 624.5 L1265.7 624.5 L1273.3 624.5 L1281.0 624.6 L1288.7 624.5 L1296.3 624.6 L1304.0 624.6" fill="none" stroke="#c9783f" stroke-width="1.2"/><path d="M851.6 625.1 L859.3 625.4 L866.9 625.3 L874.6 625.1 L882.3 624.9 L889.9 625.2 L897.6 625.4 L905.3 625.1 L912.9 625.3 L920.6 625.0 L928.3 625.2 L935.9 624.9 L943.6 625.2 L951.3 625.3 L958.9 625.4 L966.6 625.2 L974.3 625.1 L982.0 625.0 L989.6 625.1 L997.3 625.3 L1005.0 625.1 L1012.6 625.4 L1020.3 625.1 L1028.0 625.3 L1035.6 624.9 L1043.3 625.0 L1051.0 625.1 L1058.6 625.3 L1066.3 625.1 L1074.0 625.1 L1081.6 625.2 L1089.3 625.2 L1097.0 625.0 L1104.6 625.2 L1112.3 625.1 L1120.0 624.9 L1127.6 625.4 L1135.3 624.9 L1143.0 625.0 L1150.6 625.2 L1158.3 625.3 L1166.0 625.3 L1173.6 625.0 L1181.3 625.5 L1189.0 625.0 L1196.7 625.1 L1204.3 625.3 L1212.0 625.2 L1219.7 625.2 L1227.3 625.2 L1235.0 625.0 L1242.7 625.3 L1250.3 625.0 L1258.0 625.0 L1265.7 625.2 L1273.3 625.1 L1281.0 625.2 L1288.7 625.1 L1296.3 625.1 L1304.0 624.9" fill="none" stroke="#5b2d8f" stroke-width="1.3"/></svg><div class="t" style="top:99.00px;font-size:17.45px;color:#1c1c28;left:131.20px;">RUM - User Sessions - Funnel Analysis</div><div class="t" style="top:103.00px;font-size:9.3px;color:#22222c;left:490.30px;-webkit-text-stroke:.18px #22222c;">Add Widgets</div><div class="t" style="top:103.00px;font-size:8.2px;color:#5a5a64;left:546.90px;letter-spacing:-.52px;">Cmd + E</div><div class="t" style="top:103.00px;font-size:9.6px;color:#4a4a55;left:962.80px;transform:translateX(-50%);">1w</div><div class="t" style="top:103.00px;font-size:9.65px;color:#1c1c28;left:985.60px;">Past 1 Week</div><div class="t" style="top:135.00px;font-size:9.6px;color:#2b5fb5;left:135.00px;-webkit-text-stroke:.3px #2b5fb5;">Search...</div><div class="t" style="top:135.00px;font-size:8.15px;color:#22222c;left:194.70px;">Saved Views</div><div class="t" style="top:133.00px;font-size:8.35px;color:#55555f;left:328.35px;transform:translateX(-50%);">$service</div><div class="t" style="top:133.00px;font-size:10.5px;color:#22222c;left:356.60px;transform:translateX(-50%);">*</div><div class="t" style="top:133.00px;font-size:8.56px;color:#55555f;left:410.00px;transform:translateX(-50%);">$version</div><div class="t" style="top:133.00px;font-size:10.5px;color:#22222c;left:439.60px;transform:translateX(-50%);">*</div><div class="t" style="top:133.00px;font-size:8.89px;color:#55555f;left:503.25px;transform:translateX(-50%);">$applicationId</div><div class="t" style="top:133.00px;font-size:10.5px;color:#22222c;left:543.60px;transform:translateX(-50%);">*</div><div class="t" style="top:133.00px;font-size:8.77px;color:#55555f;left:597.50px;transform:translateX(-50%);">$country</div><div class="t" style="top:133.00px;font-size:10.5px;color:#22222c;left:627.60px;transform:translateX(-50%);">*</div><div class="t" style="top:133.00px;font-size:8.37px;color:#55555f;left:678.35px;transform:translateX(-50%);">$device</div><div class="t" style="top:133.00px;font-size:10.5px;color:#22222c;left:705.60px;transform:translateX(-50%);">*</div><div class="t" style="top:134.00px;font-size:7.8px;color:#55555f;left:749.85px;transform:translateX(-50%);">$OS</div><div class="t" style="top:133.00px;font-size:10.5px;color:#22222c;left:770.60px;transform:translateX(-50%);">*</div><div class="t" style="top:133.00px;font-size:8.77px;color:#55555f;left:825.20px;transform:translateX(-50%);">$browser</div><div class="t" style="top:133.00px;font-size:10.5px;color:#22222c;left:856.30px;transform:translateX(-50%);">*</div><div class="t" style="top:133.00px;font-size:8.54px;color:#55555f;left:902.00px;transform:translateX(-50%);">$env</div><div class="t" style="top:133.00px;font-size:10.5px;color:#22222c;left:924.60px;transform:translateX(-50%);">*</div><div class="t" style="top:133.00px;font-size:8.4px;color:#55555f;left:986.25px;transform:translateX(-50%);">$sessionType</div><div class="t" style="top:134.00px;font-size:8.6px;color:#22222c;left:1022.00px;">user</div><div class="t" style="top:189.00px;font-size:13.5px;font-weight:700;color:#1c1c28;left:715.40px;transform:translateX(-50%);">Sessions overview</div><div class="t" style="top:233.00px;font-size:11.6px;color:#22222c;left:125.30px;">Total user sessions</div><div class="t" style="top:379.00px;font-size:11.6px;color:#22222c;left:125.30px;">Average session duration</div><div class="t" style="top:599.00px;font-size:11.6px;color:#22222c;left:125.30px;">Page views per session</div><div class="t" style="top:233.00px;font-size:11.6px;color:#22222c;left:324.30px;">Checkout funnel</div><div class="t" style="top:526.00px;font-size:11.6px;color:#22222c;left:324.30px;">Number of sessions</div><div class="t" style="top:526.00px;font-size:11.6px;color:#22222c;left:822.30px;">Top 15 pages</div><div class="t" style="top:287.00px;font-size:48px;font-weight:700;color:#232a35;left:217.00px;transform:translateX(-50%);">79.77k</div><div class="t" style="top:438.00px;font-size:70px;font-weight:700;color:#232a35;left:216.20px;transform:translateX(-50%);">7.45</div><div class="t" style="top:508.00px;font-size:38px;color:#232a35;left:217.00px;transform:translateX(-50%);">min</div><div class="t" style="top:643.00px;font-size:70px;font-weight:700;color:#232a35;left:216.40px;transform:translateX(-50%);">7.25</div><div class="t" style="top:289.00px;font-size:7.3px;color:#2e2e38;right:1056.00px;">0k</div><div class="t" style="top:320.00px;font-size:7.3px;color:#2e2e38;right:1056.00px;">100k</div><div class="t" style="top:351.00px;font-size:7.3px;color:#2e2e38;right:1056.00px;">200k</div><div class="t" style="top:382.00px;font-size:7.3px;color:#2e2e38;right:1056.00px;">300k</div><div class="t" style="top:414.00px;font-size:7.3px;color:#2e2e38;right:1056.00px;">400k</div><div class="t" style="top:445.00px;font-size:7.3px;color:#2e2e38;right:1056.00px;">500k</div><div class="t" style="top:476.00px;font-size:7.3px;color:#2e2e38;right:1056.00px;">600k</div><div class="t" style="top:254.00px;font-size:10.2px;color:#22222c;left:373.40px;letter-spacing:.3px;">/department/sofas</div><div class="t" style="top:268.00px;font-size:9.8px;color:#22222c;left:373.40px;"><b>629K</b> sessions of 1.67M total</div><div class="t" style="top:254.00px;font-size:10.2px;color:#22222c;left:601.40px;letter-spacing:-.31px;">click on ADD TO CART</div><div class="t" style="top:268.00px;font-size:9.8px;color:#22222c;left:601.40px;"><b>489K</b> sessions</div><div class="t" style="top:362.00px;font-size:8px;font-weight:700;color:#1c1c28;left:601.40px;">78%</div><div class="t" style="top:481.00px;font-size:8.6px;color:#22222c;left:601.40px;"><b>22%</b> dropoff</div><div class="t" style="top:254.00px;font-size:10.2px;color:#22222c;left:829.60px;">/cart</div><div class="t" style="top:268.00px;font-size:9.8px;color:#22222c;left:829.60px;"><b>477K</b> sessions</div><div class="t" style="top:360.00px;font-size:8px;font-weight:700;color:#1c1c28;left:829.60px;">97%</div><div class="t" style="top:437.00px;font-size:8.6px;color:#22222c;left:829.60px;"><b>3%</b> dropoff</div><div class="t" style="top:254.00px;font-size:10.2px;color:#22222c;left:1057.30px;">/checkout</div><div class="t" style="top:268.00px;font-size:9.8px;color:#22222c;left:1057.30px;"><b>333K</b> sessions</div><div class="t" style="top:338.00px;font-size:8px;font-weight:700;color:#1c1c28;left:1057.30px;">70%</div><div class="t" style="top:433.00px;font-size:8.6px;color:#22222c;left:1057.30px;"><b>30%</b> dropoff</div><div class="t" style="top:660.00px;font-size:7.3px;color:#33333d;right:1048.40px;">0k</div><div class="t" style="top:639.00px;font-size:7.3px;color:#33333d;right:1048.40px;">0.2k</div><div class="t" style="top:618.00px;font-size:7.3px;color:#33333d;right:1048.40px;">0.4k</div><div class="t" style="top:597.00px;font-size:7.3px;color:#33333d;right:1048.40px;">0.6k</div><div class="t" style="top:577.00px;font-size:7.3px;color:#33333d;right:1048.40px;">0.8k</div><div class="t" style="top:556.00px;font-size:7.3px;color:#33333d;right:1048.40px;">1k</div><div class="t" style="top:668.00px;font-size:7.3px;color:#33333d;left:380.80px;transform:translateX(-50%);">Tue 12</div><div class="t" style="top:668.00px;font-size:7.3px;color:#33333d;left:445.52px;transform:translateX(-50%);">Wed 13</div><div class="t" style="top:668.00px;font-size:7.3px;color:#33333d;left:510.24px;transform:translateX(-50%);">Thu 14</div><div class="t" style="top:668.00px;font-size:7.3px;color:#33333d;left:574.96px;transform:translateX(-50%);">Fri 15</div><div class="t" style="top:668.00px;font-size:7.3px;color:#33333d;left:639.68px;transform:translateX(-50%);">Sat 16</div><div class="t" style="top:668.00px;font-size:7.3px;color:#33333d;left:704.40px;transform:translateX(-50%);">Oct 17</div><div class="t" style="top:668.00px;font-size:7.3px;color:#33333d;left:769.12px;transform:translateX(-50%);">Mon 18</div><div class="t" style="top:686.00px;font-size:9.5px;font-weight:700;color:#1c1c28;left:354.40px;">Tags</div><div class="t" style="top:686.00px;font-size:9.5px;font-weight:700;color:#1c1c28;left:497.50px;">Metric</div><div class="t" style="top:686.00px;font-size:9.5px;font-weight:700;color:#1c1c28;right:775.00px;">Avg</div><div class="t" style="top:686.00px;font-size:9.5px;font-weight:700;color:#1c1c28;right:729.70px;">Min</div><div class="t" style="top:686.00px;font-size:9.5px;font-weight:700;color:#1c1c28;right:686.00px;">Max</div><div class="t" style="top:686.00px;font-size:9.5px;font-weight:700;color:#1c1c28;right:642.00px;">Sum</div><div class="t" style="top:686.00px;font-size:9.5px;font-weight:700;color:#1c1c28;right:598.00px;">Value</div><div class="t" style="top:702.00px;font-size:10.5px;color:#22222c;left:354.40px;">*</div><div class="t" style="top:703.00px;font-size:8.2px;color:#22222c;left:497.50px;">Last Week Sessions</div><div class="t" style="top:702.00px;font-size:8.5px;color:#22222c;right:774.50px;">469</div><div class="t" style="top:702.00px;font-size:8.5px;color:#22222c;right:729.70px;">381</div><div class="t" style="top:702.00px;font-size:8.5px;color:#22222c;right:686.00px;">619</div><div class="t" style="top:702.00px;font-size:8.5px;color:#22222c;right:642.00px;">78.8k</div><div class="t" style="top:702.00px;font-size:8.5px;color:#22222c;right:598.00px;">466</div><div class="t" style="top:630.00px;font-size:7.3px;color:#33333d;right:550.80px;">0k</div><div class="t" style="top:606.00px;font-size:7.3px;color:#33333d;right:550.80px;">1k</div><div class="t" style="top:582.00px;font-size:7.3px;color:#33333d;right:550.80px;">2k</div><div class="t" style="top:558.00px;font-size:7.3px;color:#33333d;right:550.80px;">3k</div><div class="t" style="top:639.00px;font-size:7.3px;color:#33333d;left:878.50px;transform:translateX(-50%);">Tue 12</div><div class="t" style="top:639.00px;font-size:7.3px;color:#33333d;left:943.17px;transform:translateX(-50%);">Wed 13</div><div class="t" style="top:639.00px;font-size:7.3px;color:#33333d;left:1007.84px;transform:translateX(-50%);">Thu 14</div><div class="t" style="top:639.00px;font-size:7.3px;color:#33333d;left:1072.51px;transform:translateX(-50%);">Fri 15</div><div class="t" style="top:639.00px;font-size:7.3px;color:#33333d;left:1137.18px;transform:translateX(-50%);">Sat 16</div><div class="t" style="top:639.00px;font-size:7.3px;color:#33333d;left:1201.85px;transform:translateX(-50%);">Oct 17</div><div class="t" style="top:639.00px;font-size:7.3px;color:#33333d;left:1266.52px;transform:translateX(-50%);">Mon 18</div><div class="t" style="top:656.00px;font-size:9.5px;font-weight:700;color:#1c1c28;left:852.80px;">Tags</div><div class="t" style="top:656.00px;font-size:9.5px;font-weight:700;color:#1c1c28;left:990.60px;">Metric</div><div class="t" style="top:656.00px;font-size:9.5px;font-weight:700;color:#1c1c28;right:283.70px;">Avg</div><div class="t" style="top:656.00px;font-size:9.5px;font-weight:700;color:#1c1c28;right:240.00px;">Min</div><div class="t" style="top:656.00px;font-size:9.5px;font-weight:700;color:#1c1c28;right:195.00px;">Max</div><div class="t" style="top:656.00px;font-size:9.5px;font-weight:700;color:#1c1c28;right:151.20px;">Sum</div><div class="t" style="top:656.00px;font-size:9.5px;font-weight:700;color:#1c1c28;right:107.00px;">Value</div><div class="t" style="top:673.00px;font-size:8.65px;color:#22222c;left:852.80px;">@view.url_path_group:/</div><div class="t" style="top:673.00px;font-size:8.4px;color:#22222c;left:990.60px;">Page views</div><div class="t" style="top:673.00px;font-size:8.5px;color:#22222c;right:283.70px;">28.7</div><div class="t" style="top:673.00px;font-size:8.5px;color:#22222c;right:240.00px;">5</div><div class="t" style="top:673.00px;font-size:8.5px;color:#22222c;right:195.00px;">40</div><div class="t" style="top:673.00px;font-size:8.5px;color:#22222c;right:151.20px;">4.82k</div><div class="t" style="top:673.00px;font-size:8.5px;color:#22222c;right:107.00px;">5.0</div><div class="t" style="top:689.00px;font-size:8.65px;color:#22222c;left:852.80px;">@view.url_path_group:/cart</div><div class="t" style="top:689.00px;font-size:8.4px;color:#22222c;left:990.60px;">Page views</div><div class="t" style="top:689.00px;font-size:8.5px;color:#22222c;right:283.70px;">28.1</div><div class="t" style="top:689.00px;font-size:8.5px;color:#22222c;right:240.00px;">5</div><div class="t" style="top:689.00px;font-size:8.5px;color:#22222c;right:195.00px;">44</div><div class="t" style="top:689.00px;font-size:8.5px;color:#22222c;right:151.20px;">4.72k</div><div class="t" style="top:689.00px;font-size:8.5px;color:#22222c;right:107.00px;">5.0</div><div class="t" style="top:706.00px;font-size:8.65px;color:#22222c;left:852.80px;">@view.url_path_group:/depart...</div><div class="t" style="top:706.00px;font-size:8.4px;color:#22222c;left:990.60px;">Page views</div><div class="t" style="top:706.00px;font-size:8.5px;color:#22222c;right:283.70px;">27.7</div><div class="t" style="top:706.00px;font-size:8.5px;color:#22222c;right:240.00px;">5</div><div class="t" style="top:706.00px;font-size:8.5px;color:#22222c;right:195.00px;">31</div><div class="t" style="top:706.00px;font-size:8.5px;color:#22222c;right:151.20px;">4.65k</div><div class="t" style="top:706.00px;font-size:8.5px;color:#22222c;right:107.00px;">5.0</div></div>
</div>
</body></html>
